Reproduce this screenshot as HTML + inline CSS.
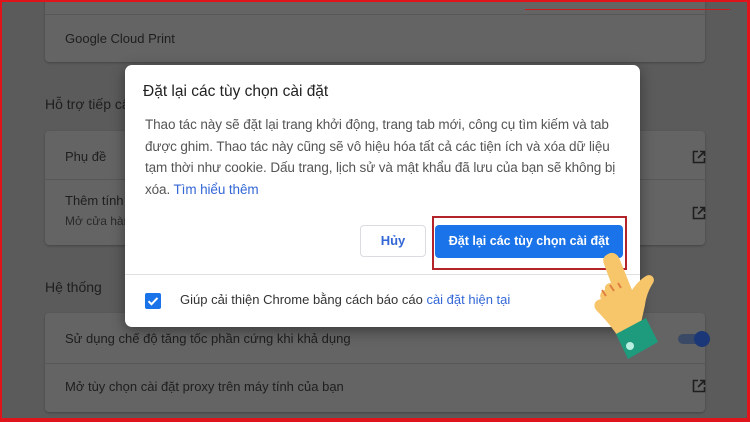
<!DOCTYPE html>
<html><head><meta charset="utf-8"><style>
*{margin:0;padding:0;box-sizing:border-box}
body{width:750px;height:422px;overflow:hidden;background:#5b5b5b;font-family:"Liberation Sans","DejaVu Sans",sans-serif;position:relative}
.frame{position:absolute;inset:0;border:2px solid #e0151b;border-right-width:3px;border-bottom-width:4px;z-index:20;pointer-events:none}
.card{position:absolute;left:45px;width:660px;background:#646464;border-radius:4px;box-shadow:0 1px 2px rgba(0,0,0,.25)}
.t{position:absolute;font-size:13px;color:#1e1e1e;white-space:nowrap}
.h{position:absolute;font-size:14px;color:#1e1e1e}
.div{position:absolute;left:45px;width:660px;height:1px;background:#575757}
.ic{position:absolute;width:14px;height:14px}
.dlg{position:absolute;left:125px;top:65px;width:515px;height:262px;background:#fff;border-radius:7px;box-shadow:0 4px 14px rgba(0,0,0,.4);z-index:5}
.dlg .title{position:absolute;left:18px;top:18px;font-size:15.5px;color:#222}
.dlg .body{position:absolute;left:20px;top:49px;width:495px;font-size:13.5px;line-height:21.5px;color:#555;white-space:nowrap;letter-spacing:-0.1px}
a{color:#3367d6;text-decoration:none}
</style></head><body>
<div class="frame"></div>
<div class="card" style="top:-5px;height:67px"></div>
<div class="div" style="top:14px"></div>
<div style="position:absolute;left:525px;top:9px;width:205px;height:1px;background:#d01818"></div>
<div class="t" style="left:65px;top:31px">Google Cloud Print</div>
<div class="h" style="left:45px;top:96px">Hỗ trợ tiếp cận</div>
<div class="card" style="top:131px;height:114px"></div>
<div class="div" style="top:179px"></div>
<div class="t" style="left:65px;top:149px">Phụ đề</div>
<div class="t" style="left:65px;top:193px">Thêm tính năng</div>
<div class="t" style="left:65px;top:214px;font-size:12px;color:#2a2a2a">Mở cửa hàng</div>
<div class="h" style="left:45px;top:279px">Hệ thống</div>
<div class="card" style="top:313px;height:99px"></div>
<div class="div" style="top:363px"></div>
<div class="t" style="left:65px;top:331px">Sử dụng chế độ tăng tốc phần cứng khi khả dụng</div>
<div class="t" style="left:65px;top:379px">Mở tùy chọn cài đặt proxy trên máy tính của bạn</div>
<svg class="ic" style="left:692px;top:150px" viewBox="0 0 14 14" fill="none" stroke="#1e1e1e" stroke-width="1.6"><path d="M6 1.5H1.5v11h11V8M8 1.5h4.5V6M12.5 1.5L6 8"/></svg>
<svg class="ic" style="left:692px;top:206px" viewBox="0 0 14 14" fill="none" stroke="#1e1e1e" stroke-width="1.6"><path d="M6 1.5H1.5v11h11V8M8 1.5h4.5V6M12.5 1.5L6 8"/></svg>
<svg class="ic" style="left:692px;top:379px" viewBox="0 0 14 14" fill="none" stroke="#1e1e1e" stroke-width="1.6"><path d="M6 1.5H1.5v11h11V8M8 1.5h4.5V6M12.5 1.5L6 8"/></svg>
<div style="position:absolute;left:678px;top:334px;width:28px;height:10px;border-radius:5px;background:#3a4a66"></div>
<div style="position:absolute;left:694px;top:331px;width:16px;height:16px;border-radius:50%;background:#1c3778"></div>
<div class="dlg">
<div class="title">Đặt lại các tùy chọn cài đặt</div>
<div class="body">Thao tác này sẽ đặt lại trang khởi động, trang tab mới, công cụ tìm kiếm và tab<br>được ghim. Thao tác này cũng sẽ vô hiệu hóa tất cả các tiện ích và xóa dữ liệu<br>tạm thời như cookie. Dấu trang, lịch sử và mật khẩu đã lưu của bạn sẽ không bị<br>xóa. <a>Tìm hiểu thêm</a></div>
<div style="position:absolute;left:235px;top:160px;width:66px;height:32px;border:1px solid #dadce0;border-radius:4px;color:#3367d6;font-size:13px;font-weight:bold;text-align:center;line-height:30px">Hủy</div>
<div style="position:absolute;left:307px;top:151px;width:195px;height:54px;border:2px solid #b3232a"></div>
<div style="position:absolute;left:310px;top:160px;width:188px;height:33px;background:#1a73e8;border-radius:4px;color:#fff;font-size:12.5px;font-weight:bold;text-align:center;line-height:33px">Đặt lại các tùy chọn cài đặt</div>
<div style="position:absolute;left:0;top:209px;width:515px;height:1px;background:#e0e0e0"></div>
<div style="position:absolute;left:20px;top:228px;width:16px;height:16px;background:#1a73e8;border-radius:2px"><svg width="16" height="16" viewBox="0 0 16 16"><path d="M3.5 8.2l3 3 6-6.3" fill="none" stroke="#fff" stroke-width="2"/></svg></div>
<div style="position:absolute;left:55px;top:227px;font-size:13px;color:#333">Giúp cải thiện Chrome bằng cách báo cáo <a>cài đặt hiện tại</a></div>
</div>
<svg style="position:absolute;left:590px;top:252px;z-index:8" width="80" height="110" viewBox="0 0 80 110">
<path d="M18 2c5-3 10 0 12 6l12 30c4-6 9-11 14-14 5-3 10 2 7 7-4 6-7 14-8 22l-4 18-24 12c-6-9-13-17-20-24-4-4-3-9 1-11l3-1c-2-4 0-8 4-9 -1-4 2-7 6-7L14 12c-2-5 0-8 4-10z" fill="#f7c56a"/>
<path d="M12 38l4 6M20 33l4 6M28 31l3 5" stroke="#e08040" stroke-width="2"/>
<path d="M26 82l30-16 12 24-30 17z" fill="#1e9a7c"/>
<circle cx="40" cy="94" r="4" fill="#b8efe0"/>
</svg>
</body></html>
